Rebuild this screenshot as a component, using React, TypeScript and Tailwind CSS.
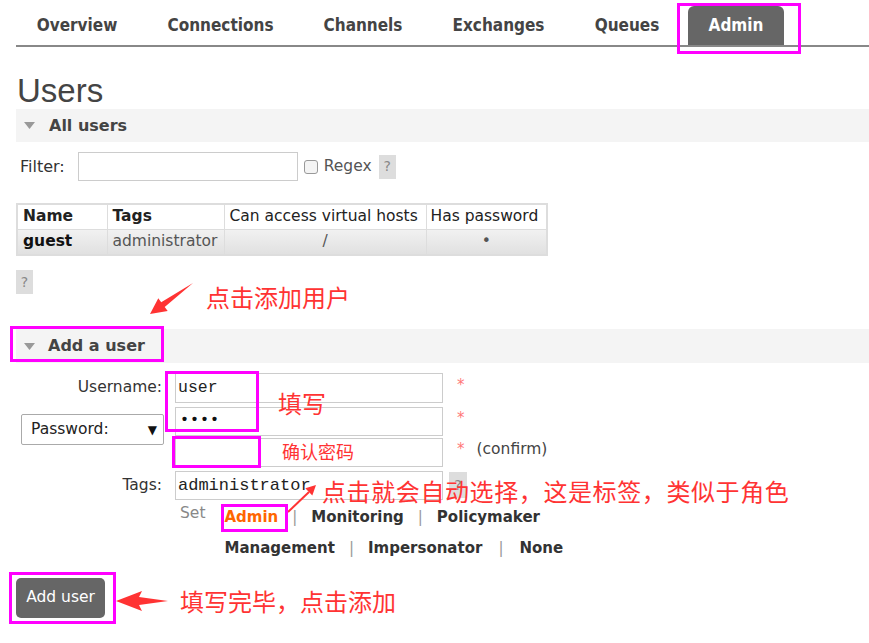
import React from "react";

const Tri = () => (
  <svg width="11" height="7" viewBox="0 0 11 7" className="shrink-0">
    <polygon points="0,0 11,0 5.5,7" fill="#999" />
  </svg>
);

const Help = ({ cls }: { cls?: string }) => (
  <div className={`flex h-[24px] w-[17px] items-center justify-center bg-[#ddd] text-[14px] text-[#888] ${cls ?? ""}`}>?</div>
);

const Box = ({ cls }: { cls: string }) => (
  <div className={`pointer-events-none absolute border-[3px] border-[#ff00ff] ${cls}`} />
);

export default function App() {
  const tabs = [
    { t: "Overview", w: "w-[122px]" },
    { t: "Connections", w: "w-[165px]" },
    { t: "Channels", w: "w-[120px]" },
    { t: "Exchanges", w: "w-[151px]" },
    { t: "Queues", w: "w-[106px]" },
  ];
  const cjk = "font-['Noto_Sans_CJK_SC',sans-serif]";
  return (
    <div className="relative h-[643px] w-[869px] overflow-hidden bg-white font-['DejaVu_Sans',sans-serif] text-[15.5px] text-[#444]">
      {/* nav */}
      <nav className="ml-4 flex h-[47px] items-end border-b-2 border-[#888] font-['DejaVu_Sans_Condensed','DejaVu_Sans',sans-serif] text-[17px] font-bold text-[#444]">
        {tabs.map((x) => (
          <div key={x.t} className={`flex h-[39px] items-center justify-center ${x.w}`}>{x.t}</div>
        ))}
        <div className="ml-[8px] flex h-[39px] w-[96px] items-center justify-center rounded-t-[6px] bg-[#666] text-white">Admin</div>
      </nav>

      <div className="pl-4">
        <h1 className="mt-[26px] h-[36px] pl-[1px] font-['Liberation_Sans',sans-serif] text-[33px] leading-[36px] text-[#444]">Users</h1>

        <div className="flex h-[33px] items-center gap-[14px] bg-[#f4f4f4] pl-[8px] text-[16px] font-bold text-[#444]">
          <Tri />
          <span>All users</span>
        </div>

        <div className="mt-[10px] flex h-[29px] items-center pl-[4px]">
          <span className="text-[16px] text-[#333]">Filter:</span>
          <div className="ml-[13px] h-[29px] w-[220px] border border-[#ccc] bg-white" />
          <div className="ml-[6px] h-[14px] w-[14px] rounded-[3px] border border-[#999] bg-[#f4f4f4]" />
          <span className="ml-[6px] text-[#555]">Regex</span>
          <Help cls="ml-[7px]" />
        </div>

        <table className="mt-[22px] border-collapse border-2 border-[#ddd] text-[#222]">
          <tbody>
            <tr className="h-[25px] bg-white">
              <td className="w-[90px] border border-[#ddd] px-[5px] font-bold">Name</td>
              <td className="w-[117px] border border-[#ddd] px-[5px] font-bold">Tags</td>
              <td className="w-[202px] border border-[#ddd] px-[5px]">Can access virtual hosts</td>
              <td className="w-[121px] border border-[#ddd] px-[4px]">Has password</td>
            </tr>
            <tr className="h-[26px] bg-gradient-to-b from-[#f2f2f2] to-[#e0e0e0]">
              <td className="border border-[#ddd] px-[5px] font-bold text-[#111]">guest</td>
              <td className="border border-[#ddd] px-[5px] text-[#555]">administrator</td>
              <td className="border border-[#ddd] text-center text-[#555]">/</td>
              <td className="border border-[#ddd] text-center text-[#555]">•</td>
            </tr>
          </tbody>
        </table>

        <Help cls="mt-[14px]" />

        <div className="mt-[35px] flex h-[34px] items-center gap-[13px] bg-[#f4f4f4] pl-[8px] text-[16px] font-bold text-[#444]">
          <Tri />
          <span>Add a user</span>
        </div>

        {/* form */}
        <div className="mt-[10px] flex h-[30px]">
          <div className="flex w-[146px] items-center justify-end text-[#333]">Username:</div>
          <div className="ml-[13px] flex h-[30px] w-[268px] items-center border border-[#ccc] pl-[2px] font-['Liberation_Mono',monospace] text-[16.5px] text-[#222]">user</div>
          <span className="ml-[14px] pt-[1px] text-[15px] text-[#f77]">*</span>
        </div>

        <div className="mt-[4px] flex">
          <div className="w-[159px]">
            <div className="ml-[5px] mt-[7px] flex h-[31px] w-[143px] items-center justify-between rounded-[2px] border border-[#aaa] bg-white pl-[9px] pr-[6px] text-[#222]">
              <span>Password:</span>
              <span className="text-[12px] text-[#111]">▼</span>
            </div>
          </div>
          <div className="flex flex-col gap-[2px]">
            <div className="flex h-[29px]">
              <div className="flex h-[29px] w-[268px] items-center border border-[#ccc] pl-[4px] font-['Liberation_Mono',monospace] text-[15px] font-bold tracking-[1px] text-[#111]">••••</div>
              <span className="ml-[14px] text-[15px] text-[#f77]">*</span>
            </div>
            <div className="flex h-[29px]">
              <div className="h-[29px] w-[268px] border border-[#ccc]" />
              <span className="ml-[14px] text-[15px] text-[#f77]">*</span>
              <span className="ml-[12px] self-start text-[#444]">(confirm)</span>
            </div>
          </div>
        </div>

        <div className="mt-[4px] flex h-[29px]">
          <div className="flex w-[146px] items-center justify-end text-[#333]">Tags:</div>
          <div className="ml-[13px] flex h-[29px] w-[268px] items-center border border-[#ccc] pl-[2px] font-['Liberation_Mono',monospace] text-[17px] text-[#222]">administrator</div>
          <Help cls="ml-[6px] mt-[1px] h-[26px] w-[18px]" />
        </div>

        <div className="flex pl-[164px] pt-[2px]">
          <span className="leading-[22px] text-[#888]">Set</span>
          <div className="ml-[19px] flex flex-col text-[15px] font-bold leading-[31px] text-[#333]">
            <div className="flex">
              <span className="text-[#ff6600]">Admin</span>
              <span className="mx-[14px] font-normal text-[#999]">|</span>
              <span>Monitoring</span>
              <span className="mx-[14px] font-normal text-[#999]">|</span>
              <span>Policymaker</span>
            </div>
            <div className="flex">
              <span>Management</span>
              <span className="mx-[14px] font-normal text-[#999]">|</span>
              <span>Impersonator</span>
              <span className="mx-[16px] font-normal text-[#999]">|</span>
              <span>None</span>
            </div>
          </div>
        </div>

        <button className="mt-[14px] flex h-[40px] w-[89px] items-center justify-center rounded-[5px] bg-[#666] text-[15.5px] text-white">Add user</button>
      </div>

      {/* annotations */}
      <svg className="pointer-events-none absolute left-0 top-0" width="869" height="643" viewBox="0 0 869 643">
        <polygon points="193,283 164.7,307.1 167.7,311.1 150,314 158.3,298.2 161.2,302.2" fill="#ff3333" />
        <line x1="288" y1="512" x2="309" y2="492" stroke="#ff3333" strokeWidth="2" />
        <polygon points="316,485 312.3,495.5 305.3,488.3" fill="#ff3333" />
        <polygon points="168,601 139,597 142,591 116,601 142,611 139,605" fill="#ff3333" />
      </svg>

      <div className={`pointer-events-none absolute left-[206px] top-[285px] text-[24px] leading-[24px] text-[#ff3333] ${cjk}`}>点击添加用户</div>
      <div className={`pointer-events-none absolute left-[278px] top-[391px] text-[24px] leading-[24px] text-[#ff3333] ${cjk}`}>填写</div>
      <div className={`pointer-events-none absolute left-[282px] top-[442px] text-[18px] leading-[18px] text-[#ff3333] ${cjk}`}>确认密码</div>
      <div className={`pointer-events-none absolute left-[322px] top-[479px] text-[24px] leading-[24px] tracking-[0.6px] text-[#ff3333] ${cjk}`}>点击就会自动选择，这是标签，类似于角色</div>
      <div className={`pointer-events-none absolute left-[180px] top-[589px] text-[24px] leading-[24px] text-[#ff3333] ${cjk}`}>填写完毕，点击添加</div>

      <Box cls="left-[677px] top-[3px] h-[51px] w-[124px]" />
      <Box cls="left-[10px] top-[326px] h-[36px] w-[154px]" />
      <Box cls="left-[165px] top-[371px] h-[61px] w-[94px]" />
      <Box cls="left-[172px] top-[436px] h-[32px] w-[89px]" />
      <Box cls="left-[221px] top-[504px] h-[28px] w-[67px]" />
      <Box cls="left-[9px] top-[572px] h-[52px] w-[107px]" />
    </div>
  );
}
